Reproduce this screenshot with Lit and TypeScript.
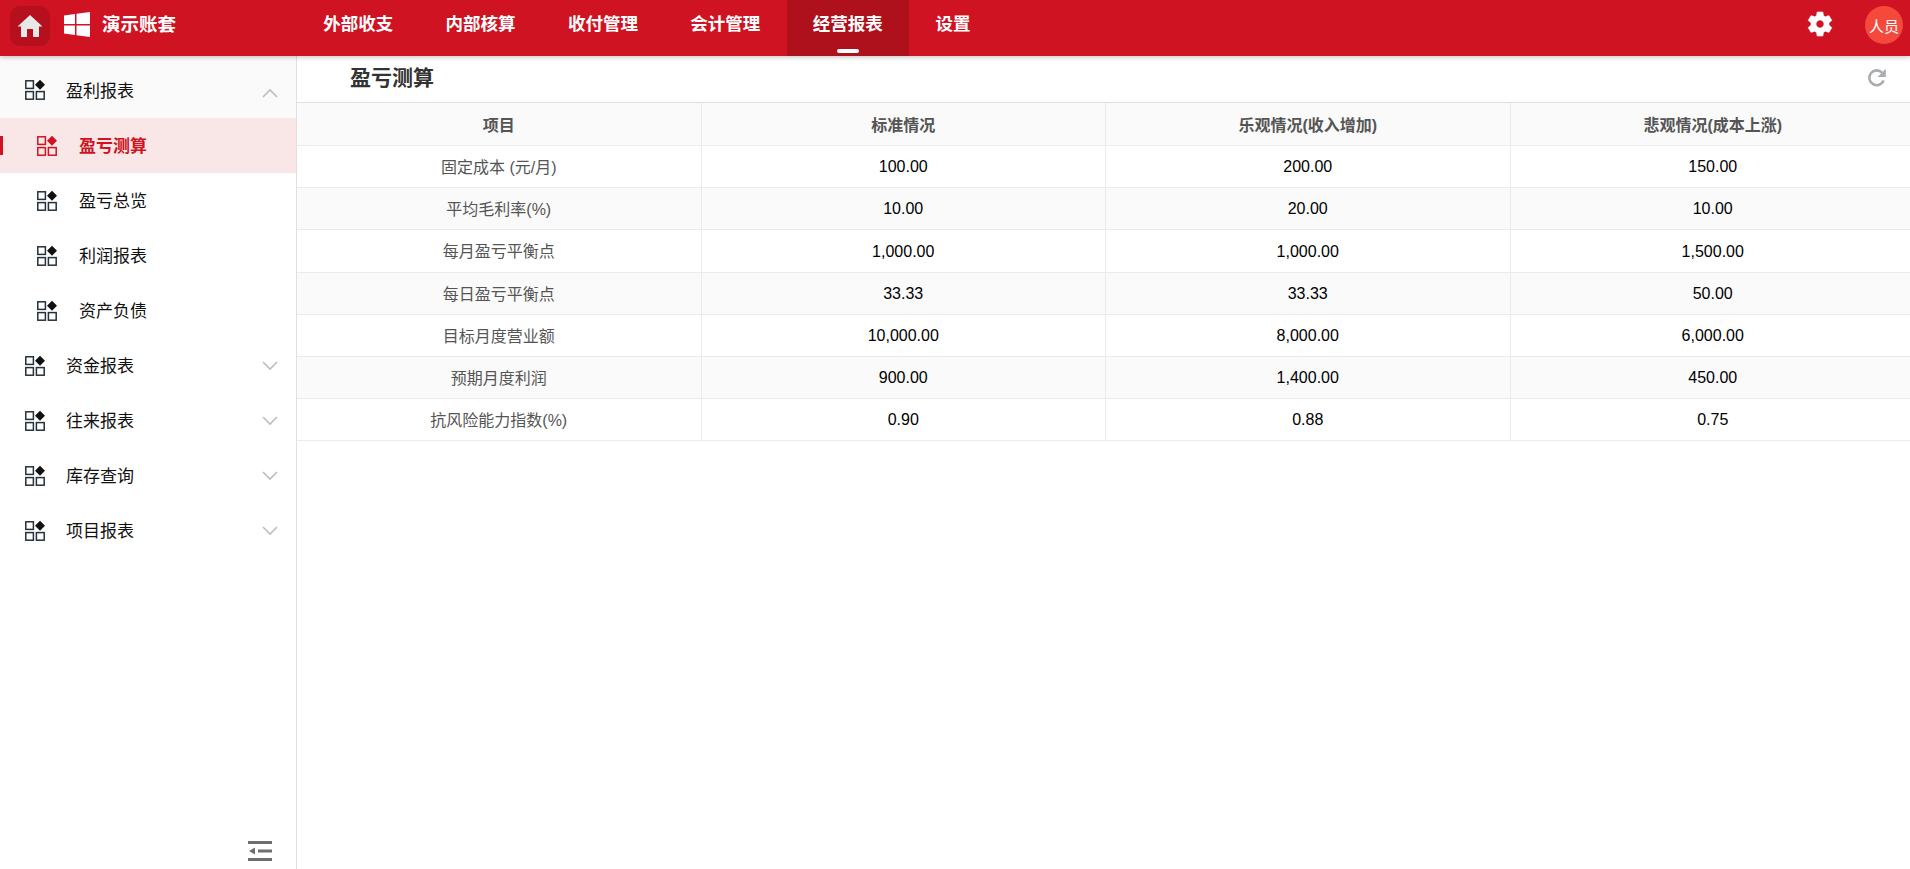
import { LitElement, html, css, svg } from 'lit';
import { customElement } from 'lit/decorators.js';

const NAV = ['外部收支', '内部核算', '收付管理', '会计管理', '经营报表', '设置'];
const ACTIVE_NAV = '经营报表';

const SUB_ITEMS = ['盈亏测算', '盈亏总览', '利润报表', '资产负债'];
const GROUPS = ['资金报表', '往来报表', '库存查询', '项目报表'];

const COLUMNS = ['项目', '标准情况', '乐观情况(收入增加)', '悲观情况(成本上涨)'];
const ROWS = [
  ['固定成本 (元/月)', '100.00', '200.00', '150.00'],
  ['平均毛利率(%)', '10.00', '20.00', '10.00'],
  ['每月盈亏平衡点', '1,000.00', '1,000.00', '1,500.00'],
  ['每日盈亏平衡点', '33.33', '33.33', '50.00'],
  ['目标月度营业额', '10,000.00', '8,000.00', '6,000.00'],
  ['预期月度利润', '900.00', '1,400.00', '450.00'],
  ['抗风险能力指数(%)', '0.90', '0.88', '0.75'],
];

const gridIcon = html`<svg class="grid-icon" viewBox="0 0 20 20" width="20" height="20">
  <g fill="none" stroke="currentColor" stroke-width="1.5">
    <rect x="0.8" y="0.8" width="7.6" height="7.6" />
    <rect x="0.8" y="11.6" width="7.6" height="7.6" />
    <rect x="11.4" y="11.6" width="7.8" height="7.6" />
  </g>
  <path class="diamond" d="M15 -0.2 L20 4.8 L15 9.8 L10 4.8 Z" />
</svg>`;

const chevron = (up: boolean) => html`<svg class="chevron ${up ? 'up' : ''}" viewBox="0 0 16 10" width="16" height="10">
  ${svg`<path d=${up ? 'M1 9 L8 2 L15 9' : 'M1 1 L8 8 L15 1'} fill="none" stroke="#bdbdbd" stroke-width="1.6" />`}
</svg>`;

@customElement('app-root')
export class AppRoot extends LitElement {
  static styles = css`
    :host {
      display: flex;
      flex-direction: column;
      height: 869px;
      overflow: hidden;
      background: #fff;
      font-family: 'Liberation Sans', 'Noto Sans CJK SC', sans-serif;
      color: #000;
    }
    .topbar {
      display: flex;
      align-items: stretch;
      flex: none;
      height: 56px;
      background: #cf1322;
      box-shadow: 0 1px 5px rgba(0, 0, 0, 0.25);
      color: #fff;
      position: relative;
      z-index: 2;
    }
    .brand {
      display: flex;
      align-items: center;
      flex: none;
      width: 297px;
      padding-left: 10px;
      box-sizing: border-box;
    }
    .home {
      display: flex;
      align-items: center;
      justify-content: center;
      width: 40px;
      height: 40px;
      margin-top: -4px;
      border-radius: 10px;
      background: #b60f1d;
    }
    .logo { margin-left: 14px; margin-top: -7px; }
    .brand-name {
      margin-left: 12px;
      margin-top: -10px;
      font-size: 18.5px;
      font-weight: 700;
    }
    .nav { display: flex; flex: 1; }
    .nav-item {
      position: relative;
      width: 122.4px;
      height: 56px;
      line-height: 48px;
      text-align: center;
      font-size: 17.5px;
      font-weight: 700;
    }
    .nav-item.short { width: 88px; }
    .nav-item.active { background: #ae101c; }
    .nav-item.active::after {
      content: '';
      position: absolute;
      left: 50%;
      bottom: 3px;
      width: 22px;
      height: 4px;
      margin-left: -11px;
      border-radius: 2px;
      background: #fff;
    }
    .actions {
      display: flex;
      align-items: center;
      gap: 30px;
      padding-right: 7px;
    }
    .avatar {
      display: flex;
      align-items: center;
      justify-content: center;
      width: 38px;
      height: 38px;
      margin-top: -6px;
      border-radius: 50%;
      background: #f5493c;
      font-size: 15px;
    }
    .gear { margin-top: -9px; }

    .body { display: flex; flex: 1; min-height: 0; }
    .sidebar {
      display: flex;
      flex-direction: column;
      flex: none;
      width: 297px;
      box-sizing: border-box;
      border-right: 1px solid #e0e0e0;
    }
    .menu-head {
      display: flex;
      align-items: center;
      height: 55px;
      padding-left: 25px;
      font-size: 17px;
      color: #111;
    }
    .menu-head.open { height: 62px; padding-top: 6px; box-sizing: border-box; background: #fafafa; }
    .menu-head .label { margin-left: 21px; margin-bottom: 2px; flex: 1; }
    .chevron { margin-right: 18px; }
    .chevron.up { margin-top: 5px; }
    .menu-sub {
      display: flex;
      align-items: center;
      position: relative;
      height: 55px;
      padding-left: 37px;
      font-size: 17px;
      color: #111;
    }
    .menu-sub .label { margin-left: 22px; margin-bottom: 2px; }
    .menu-sub.active { background: #f9e7e8; color: #cf1322; font-weight: 700; }
    .menu-sub.active::before {
      content: '';
      position: absolute;
      left: 0;
      top: 18px;
      width: 3px;
      height: 19px;
      background: #cf1322;
    }
    .grid-icon { color: #26313c; flex: none; overflow: visible; }
    .diamond { fill: #111; }
    .menu-sub.active .grid-icon { color: #cf1322; }
    .menu-sub.active .diamond { fill: #cf1322; }
    .collapse {
      display: flex;
      justify-content: flex-end;
      margin-top: auto;
      padding: 0 24px 8px 0;
    }

    .main { flex: 1; min-width: 0; overflow: hidden; }
    .title-bar {
      display: flex;
      align-items: center;
      justify-content: space-between;
      height: 46px;
      box-sizing: content-box;
      padding: 0 23px 0 53px;
      border-bottom: 1px solid #e0e0e0;
      font-size: 21px;
      font-weight: 700;
      color: #333;
    }
    .title-bar span { margin-bottom: 6px; }
    .title-bar svg { margin-bottom: 2px; }
    table {
      width: 1618px;
      table-layout: fixed;
      border-collapse: separate;
      border-spacing: 0;
      font-size: 16px;
    }
    th, td {
      height: 42px;
      padding: 0;
      box-sizing: border-box;
      text-align: center;
      border-bottom: 1px solid #ebebeb;
      border-right: 1px solid #ebebeb;
      font-weight: 400;
    }
    td { padding-top: 1px; }
    td:first-child { padding: 0 0 2px; color: #555; }
    th:last-child, td:last-child { border-right: none; }
    th { height: 43px; padding-bottom: 1px; background: #fafafa; color: #555; font-weight: 700; font-size: 16px; }
    tbody tr:nth-child(even) td { background: #fafafa; }
    tbody tr:nth-child(3) td { height: 43px; }
  `;

  render() {
    return html`
      <header class="topbar">
        <div class="brand">
          <div class="home">
            <svg viewBox="0 0 26 24" width="26" height="24">
              <path fill="#e8e8e8" d="M13 1 L25.5 12.5 L22 12.5 L22 23 L16 23 L16 15 L10 15 L10 23 L4 23 L4 12.5 L0.5 12.5 Z" />
            </svg>
          </div>
          <svg class="logo" viewBox="0 0 26 25" width="26" height="25">
            <path fill="#fff" d="M0 3.6 L11 2 V12 H0 Z M12.5 1.8 L26 0 V12 H12.5 Z M0 13.4 H11 V23 L0 21.5 Z M12.5 13.4 H26 V25 L12.5 23.2 Z" />
          </svg>
          <span class="brand-name">演示账套</span>
        </div>
        <nav class="nav">
          ${NAV.map(n => html`
            <div class="nav-item ${n === ACTIVE_NAV ? 'active' : ''} ${n === '设置' ? 'short' : ''}">${n}</div>
          `)}
        </nav>
        <div class="actions">
          <svg class="gear" viewBox="0 0 24 24" width="30" height="30">
            <path fill="#fff" stroke="#fff" stroke-width="0.5" stroke-linejoin="round" d="M19.14 12.94c.04-.3.06-.61.06-.94 0-.32-.02-.64-.07-.94l2.03-1.58c.18-.14.23-.41.12-.61l-1.92-3.32c-.12-.22-.37-.29-.59-.22l-2.39.96c-.5-.38-1.03-.7-1.62-.94l-.36-2.54c-.04-.24-.24-.41-.48-.41h-3.84c-.24 0-.43.17-.47.41l-.36 2.54c-.59.24-1.13.57-1.62.94l-2.39-.96c-.22-.08-.47 0-.59.22L2.74 8.87c-.12.21-.08.47.12.61l2.03 1.58c-.05.3-.09.63-.09.94s.02.64.07.94l-2.03 1.58c-.18.14-.23.41-.12.61l1.92 3.32c.12.22.37.29.59.22l2.39-.96c.5.38 1.03.7 1.62.94l.36 2.54c.05.24.24.41.48.41h3.84c.24 0 .44-.17.47-.41l.36-2.54c.59-.24 1.13-.56 1.62-.94l2.39.96c.22.08.47 0 .59-.22l1.92-3.32c.12-.22.07-.47-.12-.61l-2.01-1.58zM12 15.2c-1.76 0-3.2-1.44-3.2-3.2s1.44-3.2 3.2-3.2 3.2 1.44 3.2 3.2-1.44 3.2-3.2 3.2z" />
          </svg>
          <div class="avatar">人员</div>
        </div>
      </header>
      <div class="body">
        <aside class="sidebar">
          <div class="menu-head open">
            ${gridIcon}<span class="label">盈利报表</span>${chevron(true)}
          </div>
          ${SUB_ITEMS.map((s, i) => html`
            <div class="menu-sub ${i === 0 ? 'active' : ''}">${gridIcon}<span class="label">${s}</span></div>
          `)}
          ${GROUPS.map(g => html`
            <div class="menu-head">${gridIcon}<span class="label">${g}</span>${chevron(false)}</div>
          `)}
          <div class="collapse">
            <svg viewBox="0 0 24 20" width="24" height="20">
              <path fill="#6e6e6e" d="M0 0 H24 V3 H0 Z M10 8.5 H24 V11.5 H10 Z M0 17 H24 V20 H0 Z M1 10 L7 6.5 V13.5 Z" />
            </svg>
          </div>
        </aside>
        <main class="main">
          <div class="title-bar">
            <span>盈亏测算</span>
            <svg viewBox="0 0 20 20" width="20" height="20">
              <path fill="none" stroke="#a8adb2" stroke-width="2.6" d="M16.6 12.5 A7.4 7.4 0 1 1 15 4.6" />
              <path fill="#a8adb2" d="M18.8 0.8 V9 H10.6 Z" />
            </svg>
          </div>
          <table>
            <thead>
              <tr>${COLUMNS.map(c => html`<th>${c}</th>`)}</tr>
            </thead>
            <tbody>
              ${ROWS.map(r => html`<tr>${r.map(v => html`<td>${v}</td>`)}</tr>`)}
            </tbody>
          </table>
        </main>
      </div>
    `;
  }
}
